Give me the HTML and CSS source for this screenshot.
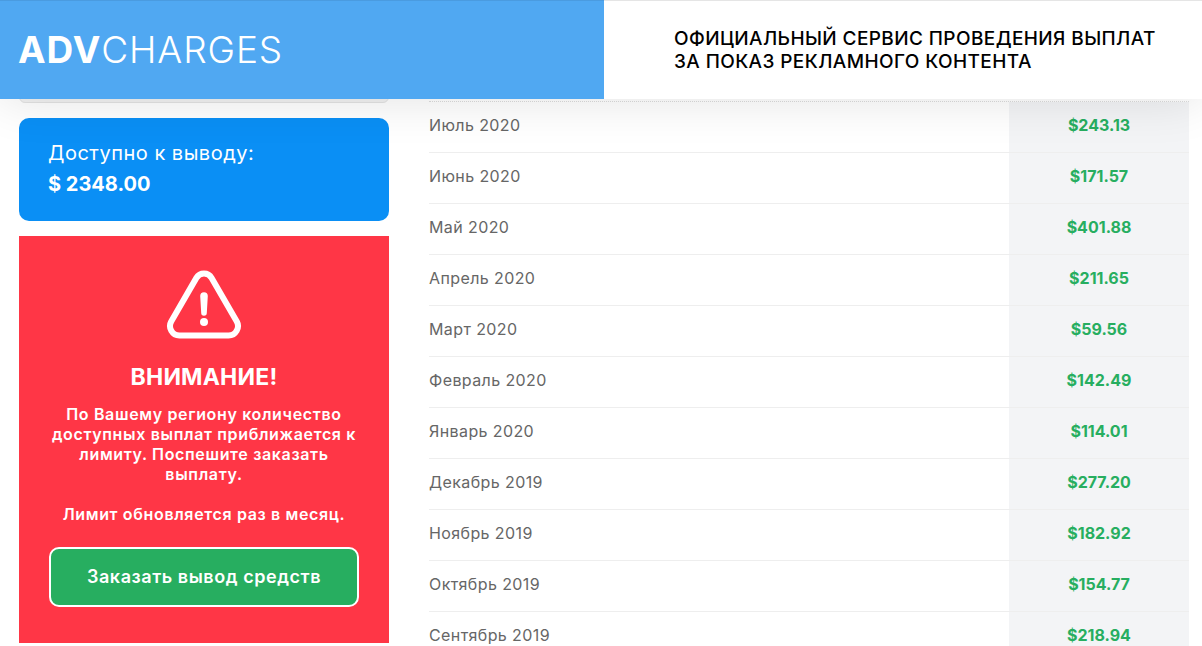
FILE: index.html
```html
<!DOCTYPE html>
<html lang="en">

<head>
    <meta charset="UTF-8">
    <meta name="viewport" content="width=device-width, initial-scale=1.0">
    <title>ADVCHARGES</title>
    <link rel="stylesheet" href="styles.css">
</head>

<body>
    <header class="header">
        <div class="logo"><b>ADV</b>CHARGES</div>
        <div class="slogan">ОФИЦИАЛЬНЫЙ СЕРВИС ПРОВЕДЕНИЯ ВЫПЛАТ<br>ЗА ПОКАЗ РЕКЛАМНОГО КОНТЕНТА</div>
    </header>
    <div class="content">
        <div class="side">
            <div class="card-end"></div>
            <div class="balance">
                <div class="balance-title">Доступно к выводу:</div>
                <div class="balance-sum">$ 2348.00</div>
            </div>
            <div class="alert">
                <svg class="alert-icon" viewBox="0 0 76 70" width="76" height="70">
                    <path d="M38 3.500c-3.200 0-6 1.700-7.600 4.400L5.200 51.500c-3.400 6.200 1 14 8.200 14h49.200c7.200 0 11.600-7.800 8.200-14L45.600 7.900C44 5.200 41.200 3.500 38 3.500z" fill="none" stroke="#fff" stroke-width="6" stroke-linejoin="round"/>
                    <path d="M34.200 26a3.800 3.800 0 0 1 7.600 0l-1 17a2.800 2.800 0 0 1-5.600 0z" fill="#fff"/>
                    <circle cx="38" cy="52" r="4" fill="#fff"/>
                </svg>
                <h3 class="alert-title">ВНИМАНИЕ!</h3>
                <p class="alert-text">По Вашему региону количество доступных выплат приближается к лимиту. Поспешите заказать выплату.</p>
                <p class="alert-text alert-limit">Лимит обновляется раз в месяц.</p>
                <button class="btn-order">Заказать вывод средств</button>
            </div>
        </div>
        <div class="table">
            <div class="row"><span class="month">Июль 2020</span><span class="sum">$243.13</span></div>
            <div class="row"><span class="month">Июнь 2020</span><span class="sum">$171.57</span></div>
            <div class="row"><span class="month">Май 2020</span><span class="sum">$401.88</span></div>
            <div class="row"><span class="month">Апрель 2020</span><span class="sum">$211.65</span></div>
            <div class="row"><span class="month">Март 2020</span><span class="sum">$59.56</span></div>
            <div class="row"><span class="month">Февраль 2020</span><span class="sum">$142.49</span></div>
            <div class="row"><span class="month">Январь 2020</span><span class="sum">$114.01</span></div>
            <div class="row"><span class="month">Декабрь 2019</span><span class="sum">$277.20</span></div>
            <div class="row"><span class="month">Ноябрь 2019</span><span class="sum">$182.92</span></div>
            <div class="row"><span class="month">Октябрь 2019</span><span class="sum">$154.77</span></div>
            <div class="row"><span class="month">Сентябрь 2019</span><span class="sum">$218.94</span></div>
        </div>
    </div>
</body>

</html>
```

FILE: styles.css
```css
html,
body {
    height: 100%;
}

body {
    margin: 0;
    overflow: hidden;
    background-color: white;
    font-family: "Inter", "Noto Sans", sans-serif;
    color: white;
}

.header {
    position: relative;
    z-index: 2;
    display: flex;
    height: 99px;
    box-shadow: 0 0 50px rgba(0, 0, 0, 0.12);
    background-color: white;
}

.logo {
    width: 604px;
    box-sizing: border-box;
    padding-left: 18px;
    line-height: 98px;
    font-size: 37px;
    font-weight: 300;
    letter-spacing: 0.9px;
    background-color: #50a8f2;
    border-top: 1px solid #4a9be0;
}

.logo b {
    font-weight: 700;
}

.slogan {
    flex: 1;
    padding: 26px 0 0 70px;
    font-size: 19px;
    line-height: 23px;
    font-weight: 500;
    letter-spacing: 0.4px;
    color: black;
    border-top: 1px solid #e5e5e5;
}

.content {
    display: flex;
    align-items: flex-start;
    padding-left: 19px;
}

.side {
    width: 370px;
    flex-shrink: 0;
}

.card-end {
    height: 12px;
    margin-top: -8px;
    box-sizing: border-box;
    background-color: #f2f2f2;
    border: 1px solid #e3e3e3;
    border-radius: 10px;
}

.balance {
    margin-top: 15px;
    height: 103px;
    box-sizing: border-box;
    padding: 23px 29px;
    background-color: #0a8ff5;
    border-radius: 10px;
}

.balance-title {
    font-size: 20px;
    line-height: 24px;
    letter-spacing: 0.5px;
}

.balance-sum {
    margin-top: 7px;
    font-size: 20px;
    line-height: 24px;
    font-weight: 700;
}

.alert {
    margin-top: 15px;
    height: 407px;
    box-sizing: border-box;
    padding: 34px 30px 0;
    background-color: #ff3646;
    text-align: center;
}

.alert-icon {
    display: block;
    margin: 0 auto;
}

.alert-title {
    margin: 24px 0 0;
    font-size: 23px;
    line-height: 26px;
    font-weight: 700;
    letter-spacing: 0.2px;
}

.alert-text {
    margin: 14px 0 0;
    font-size: 16px;
    line-height: 20px;
    font-weight: 600;
    letter-spacing: 0.65px;
}

.alert-limit {
    margin-top: 20px;
}

.btn-order {
    display: block;
    width: 100%;
    height: 60px;
    margin-top: 23px;
    font-family: inherit;
    font-size: 18px;
    font-weight: 600;
    letter-spacing: 0.55px;
    line-height: 54px;
    color: white;
    background-color: #27ae60;
    border: 2px solid white;
    border-radius: 10px;
}

.table {
    width: 760px;
    margin-left: 40px;
    margin-top: 2px;
    border-top: 1px dotted #dddddd;
}

.row {
    display: flex;
    height: 50px;
    border-bottom: 1px solid #eeeeee;
    align-items: stretch;
    font-size: 16px;
}

.month {
    flex: 1;
    line-height: 47px;
    letter-spacing: 0.4px;
    color: #666666;
}

.sum {
    width: 180px;
    line-height: 47px;
    text-align: center;
    font-weight: 700;
    color: #27ae60;
    background-color: #f3f4f6;
}
```
